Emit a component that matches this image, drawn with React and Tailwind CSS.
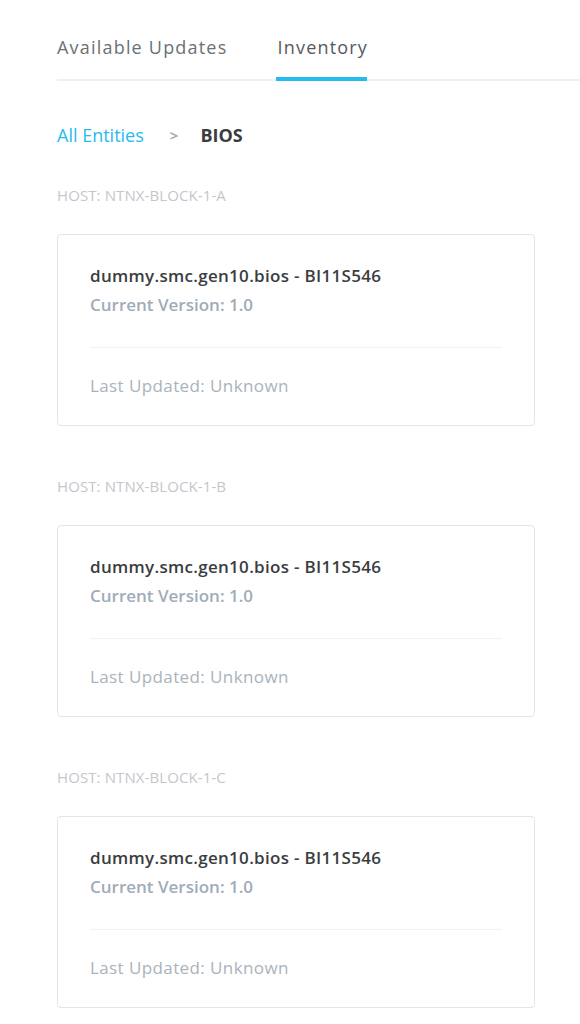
import React from "react";

const hosts = ["NTNX-BLOCK-1-A", "NTNX-BLOCK-1-B", "NTNX-BLOCK-1-C"];

const BiosCard = ({ host }) => (
  <div>
    <div className="text-[15px] uppercase tracking-[0.1px] text-[#c3c7cc] leading-[12px]">
      Host: {host}
    </div>
    <div className="mt-[33px] rounded-[4px] border border-[#e3e5e8] bg-white px-8 pt-[30px] pb-[28px]">
      <div className="text-[17px] font-semibold tracking-[0.3px] text-[#3a3d40] leading-[22px]">
        dummy.smc.gen10.bios - BI11S546
      </div>
      <div className="mt-[7px] text-[17px] font-semibold text-[#a0acb8] leading-[22px]">
        Current Version: 1.0
      </div>
      <div className="mt-[31px] border-t border-[#f0f1f3]" />
      <div className="mt-[27px] text-[17px] tracking-[0.4px] text-[#a9b3bd] leading-[22px]">
        Last Updated: Unknown
      </div>
    </div>
  </div>
);

export default function App() {
  return (
    <div className="min-h-screen bg-white pl-[57px]" style={{ fontFamily: "'Open Sans', sans-serif" }}>
      <div className="flex border-b-2 border-[#eeeff1] h-[81px] items-end">
        <div className="pb-[20px] text-[18px] leading-[24px] tracking-[1.2px] text-[#6b7075] mr-[50px]">
          Available Updates
        </div>
        <div className="relative pb-[20px] text-[18px] leading-[24px] tracking-[1.2px] text-[#55595d]">
          Inventory
          <div className="absolute left-[-1px] right-[1px] bottom-[-2px] h-[4px] bg-[#26bbf0]" />
        </div>
      </div>

      <div className="mt-[43px] flex items-center text-[18px] leading-[22px]">
        <span className="text-[#26bbf0]">All Entities</span>
        <span className="ml-[26px] text-[#a6adb4] font-bold text-[15px]">&gt;</span>
        <span className="ml-[22px] font-bold text-[#3a3d40]">BIOS</span>
      </div>

      <div className="mt-[43px] w-[478px] flex flex-col gap-[54px]">
        {hosts.map((h) => (
          <BiosCard key={h} host={h} />
        ))}
      </div>
    </div>
  );
}
